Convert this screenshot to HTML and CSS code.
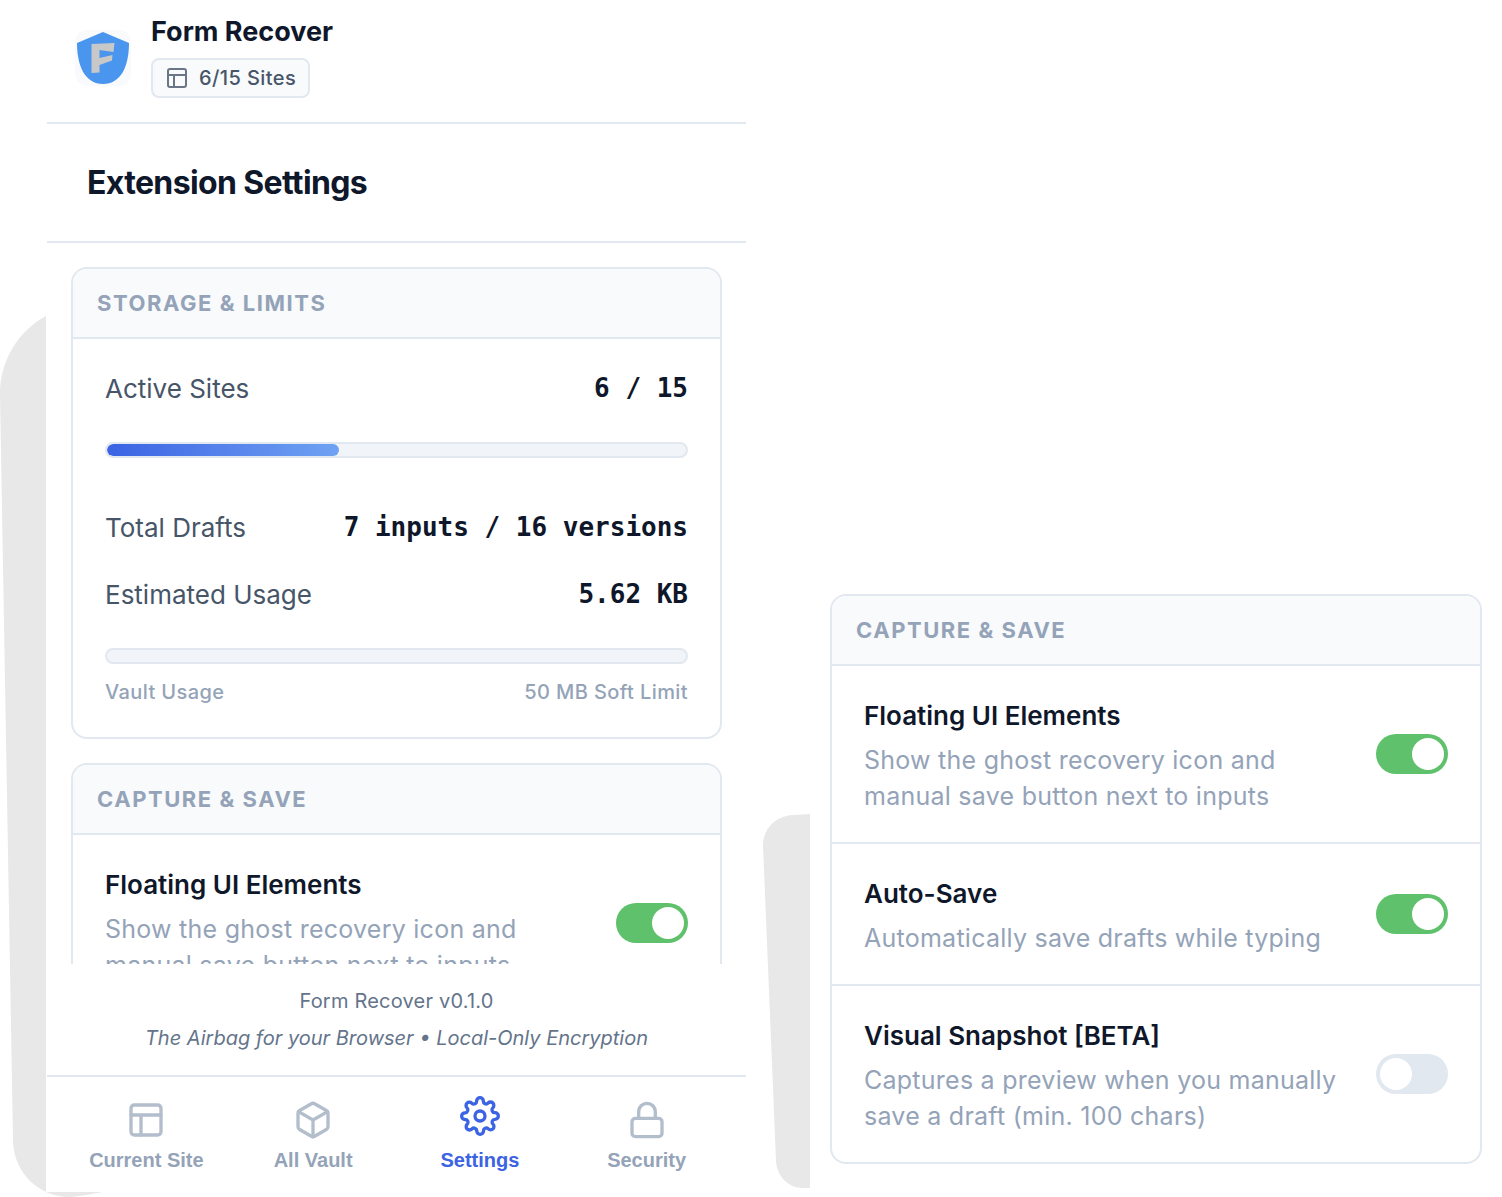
FILE: index.html
```html
<!DOCTYPE html>
<html lang="en">
<head>
    <meta charset="UTF-8">
    <meta name="viewport" content="width=device-width, initial-scale=1.0">
    <title>Form Recover - Extension Settings</title>
    <link rel="stylesheet" href="styles.css">
</head>
<body>
    <div class="stage">
        <!-- Extension popup -->
        <div class="popup-column">
            <svg class="shadow shadow-left" width="103" height="881" viewBox="0 0 103 881" aria-hidden="true">
                <path d="M46 0C18 15 0 45 0 78L13 825C14 858 40 881 70 881C82 880 92 878 102 876H46Z" fill="#e8e8e8"/>
            </svg>
            <div class="popup">
                <header class="header">
                    <svg class="logo" viewBox="0 0 56 56" role="img" aria-label="Form Recover logo">
                        <rect width="56" height="56" rx="12" fill="#f8fafc"/>
                        <path d="M28 2L54 13C54 36 46 54 28 54S2 36 2 13Z" fill="#4a95ee"/>
                        <path d="M16.500 14L39.500 13L38.500 22L24.500 20V28L37.500 25L37 30.500L24.500 35V42.500L16.500 43Z" fill="#c8c8c8"/>
                    </svg>
                    <div class="brand">
                        <h1>Form Recover</h1>
                        <div class="badge">
                            <svg class="badge-icon" viewBox="0 0 24 24" aria-hidden="true">
                                <rect x="3" y="3" width="18" height="18" rx="2"/>
                                <path d="M3 9h18M9 21V9"/>
                            </svg>
                            <span>6/15 Sites</span>
                        </div>
                    </div>
                </header>

                <div class="page-title">
                    <h2>Extension Settings</h2>
                </div>

                <main class="content">
                    <section class="card">
                        <h3 class="card-title">Storage &amp; Limits</h3>
                        <div class="stats">
                            <div class="stat">
                                <span>Active Sites</span>
                                <strong>6 / 15</strong>
                            </div>
                            <div class="bar" role="progressbar" aria-label="Active Sites" aria-valuenow="40">
                                <div class="bar-fill" style="width: 40%"></div>
                            </div>
                            <div class="stat stat-group">
                                <span>Total Drafts</span>
                                <strong>7 inputs / 16 versions</strong>
                            </div>
                            <div class="stat stat-next">
                                <span>Estimated Usage</span>
                                <strong>5.62 KB</strong>
                            </div>
                            <div class="bar" role="progressbar" aria-label="Vault Usage" aria-valuenow="0">
                                <div class="bar-fill" style="width: 0%"></div>
                            </div>
                            <div class="bar-labels">
                                <span>Vault Usage</span>
                                <span>50 MB Soft Limit</span>
                            </div>
                        </div>
                    </section>

                    <section class="card">
                        <h3 class="card-title">Capture &amp; Save</h3>
                        <div class="setting">
                            <label class="setting-text" for="floating">
                                <span class="setting-name">Floating UI Elements</span>
                                <span class="setting-desc">Show the ghost recovery icon and manual save button next to inputs</span>
                            </label>
                            <input class="toggle" type="checkbox" id="floating" checked>
                        </div>
                    </section>
                </main>

                <footer class="footer">
                    <p>Form Recover v0.1.0</p>
                    <p class="tagline">The Airbag for your Browser • Local-Only Encryption</p>
                </footer>

                <nav class="nav">
                    <button class="nav-item" type="button">
                        <svg class="nav-icon" viewBox="0 0 24 24" aria-hidden="true">
                            <rect x="3" y="3" width="18" height="18" rx="2"/>
                            <path d="M3 9h18M9 21V9"/>
                        </svg>
                        <span>Current Site</span>
                    </button>
                    <button class="nav-item" type="button">
                        <svg class="nav-icon" viewBox="0 0 24 24" aria-hidden="true">
                            <path d="M21 16V8a2 2 0 0 0-1-1.730l-7-4a2 2 0 0 0-2 0l-7 4A2 2 0 0 0 3 8v8a2 2 0 0 0 1 1.730l7 4a2 2 0 0 0 2 0l7-4A2 2 0 0 0 21 16z"/>
                            <path d="M3.270 6.960L12 12.010l8.730-5.050M12 22.080V12"/>
                        </svg>
                        <span>All Vault</span>
                    </button>
                    <button class="nav-item active" type="button">
                        <svg class="nav-icon" viewBox="0 0 24 24" aria-hidden="true">
                            <circle cx="12" cy="12" r="3"/>
                            <path d="M19.400 15a1.650 1.650 0 0 0 .33 1.820l.06.06a2 2 0 0 1 0 2.830 2 2 0 0 1-2.830 0l-.06-.06a1.650 1.650 0 0 0-1.820-.33 1.650 1.650 0 0 0-1 1.510V21a2 2 0 0 1-2 2 2 2 0 0 1-2-2v-.09A1.650 1.650 0 0 0 9 19.400a1.650 1.650 0 0 0-1.820.33l-.06.06a2 2 0 0 1-2.830 0 2 2 0 0 1 0-2.830l.06-.06a1.650 1.650 0 0 0 .33-1.820 1.650 1.650 0 0 0-1.510-1H3a2 2 0 0 1-2-2 2 2 0 0 1 2-2h.09A1.650 1.650 0 0 0 4.600 9a1.650 1.650 0 0 0-.33-1.820l-.06-.06a2 2 0 0 1 0-2.830 2 2 0 0 1 2.830 0l.06.06a1.650 1.650 0 0 0 1.820.33H9a1.650 1.650 0 0 0 1-1.510V3a2 2 0 0 1 2-2 2 2 0 0 1 2 2v.09a1.650 1.650 0 0 0 1 1.510 1.650 1.650 0 0 0 1.820-.33l.06-.06a2 2 0 0 1 2.830 0 2 2 0 0 1 0 2.830l-.06.06a1.650 1.650 0 0 0-.33 1.820V9a1.650 1.650 0 0 0 1.510 1H21a2 2 0 0 1 2 2 2 2 0 0 1-2 2h-.09a1.650 1.650 0 0 0-1.510 1z"/>
                        </svg>
                        <span>Settings</span>
                    </button>
                    <button class="nav-item" type="button">
                        <svg class="nav-icon" viewBox="0 0 24 24" aria-hidden="true">
                            <rect x="3" y="11" width="18" height="11" rx="2"/>
                            <path d="M7 11V7a5 5 0 0 1 10 0v4"/>
                        </svg>
                        <span>Security</span>
                    </button>
                </nav>
            </div>
        </div>

        <!-- Capture settings card -->
        <div class="detail-column">
            <svg class="shadow shadow-right" width="47" height="374" viewBox="0 0 47 374" aria-hidden="true">
                <path d="M47 0L30 1C12 2 0 15 0 32L13 347C14 362 25 374 40 374H47Z" fill="#e8e8e8"/>
            </svg>
            <section class="card">
                <h3 class="card-title">Capture &amp; Save</h3>
                <div class="setting">
                    <label class="setting-text" for="floating-detail">
                        <span class="setting-name">Floating UI Elements</span>
                        <span class="setting-desc">Show the ghost recovery icon and manual save button next to inputs</span>
                    </label>
                    <input class="toggle" type="checkbox" id="floating-detail" checked>
                </div>
                <div class="setting">
                    <label class="setting-text" for="autosave">
                        <span class="setting-name">Auto-Save</span>
                        <span class="setting-desc">Automatically save drafts while typing</span>
                    </label>
                    <input class="toggle" type="checkbox" id="autosave" checked>
                </div>
                <div class="setting">
                    <label class="setting-text" for="snapshot">
                        <span class="setting-name">Visual Snapshot [BETA]</span>
                        <span class="setting-desc">Captures a preview when you manually save a draft (min. 100 chars)</span>
                    </label>
                    <input class="toggle" type="checkbox" id="snapshot">
                </div>
            </section>
        </div>
    </div>
</body>
</html>
```
FILE: styles.css
```css
* {
    box-sizing: border-box;
}

body {
    margin: 0;
    font-family: Inter, sans-serif;
    background: #fff;
    color: #0f172a;
}

h1, h2, h3, p {
    margin: 0;
}

.stage {
    display: grid;
    grid-template-columns: 699fr 672fr;
    gap: 64px;
    height: 100vh;
    padding: 0 20px 0 47px;
    overflow: hidden;
}

/* Grey shapes behind the panels */
.popup-column,
.detail-column {
    position: relative;
    min-width: 0;
}

.shadow {
    position: absolute;
    z-index: -1;
}

.shadow-left {
    left: -47px;
    bottom: 0;
}

.shadow-right {
    left: -47px;
    bottom: -24px;
}

/* Popup */
.popup-column {
    height: 100vh;
    padding-bottom: 5px;
}

.popup {
    display: flex;
    flex-direction: column;
    height: 100%;
    background: #fff;
}

.detail-column {
    align-self: end;
    margin-bottom: 33px;
    padding-left: 20px;
    background: #fff;
}

.header {
    display: flex;
    align-items: center;
    gap: 20px;
    padding: 14px 28px 24px;
    border-bottom: 2px solid #e2e8f0;
}

.logo {
    width: 56px;
    height: 56px;
    margin-top: 4px;
}

.brand {
    display: flex;
    flex-direction: column;
    align-items: flex-start;
    gap: 8px;
}

.brand h1 {
    font-size: 27px;
    line-height: 36px;
    font-weight: 700;
}

.badge {
    display: flex;
    align-items: center;
    gap: 10px;
    height: 40px;
    padding: 0 12px;
    border: 2px solid #e2e8f0;
    border-radius: 8px;
    background: #f8fafc;
    color: #475569;
    font-size: 20px;
    font-weight: 500;
    letter-spacing: 0.02em;
}

.badge-icon,
.nav-icon {
    fill: none;
    stroke: currentColor;
    stroke-width: 2;
    stroke-linecap: round;
    stroke-linejoin: round;
}

.badge-icon {
    width: 24px;
    height: 24px;
    opacity: 0.8;
}

.page-title {
    padding: 36px 40px;
    border-bottom: 2px solid #e2e8f0;
}

.page-title h2 {
    font-size: 32px;
    line-height: 45px;
    font-weight: 700;
    letter-spacing: -0.02em;
}

.content {
    display: flex;
    flex: 1;
    flex-direction: column;
    gap: 24px;
    min-height: 0;
    padding: 24px 24px 0;
    overflow: hidden;
}

/* Cards */
.card {
    flex-shrink: 0;
    border: 2px solid #e2e8f0;
    border-radius: 16px;
    background: #fff;
    overflow: hidden;
}

.card-title {
    padding: 0 24px;
    border-bottom: 2px solid #e2e8f0;
    background: #f8fafc;
    color: #94a3b8;
    font-size: 22px;
    line-height: 68px;
    font-weight: 700;
    letter-spacing: 0.07em;
    text-transform: uppercase;
}

.stats {
    padding: 28px 32px 32px;
}

.stat {
    display: flex;
    justify-content: space-between;
    color: #475569;
    font-size: 26px;
    line-height: 43px;
}

.stat strong {
    color: #0f172a;
    font-family: "DejaVu Sans Mono", monospace;
}

.stat-group {
    margin-top: 48px;
}

.stat-next {
    margin-top: 24px;
}

.bar {
    height: 16px;
    margin-top: 32px;
    border: 2px solid #e2e8f0;
    border-radius: 8px;
    background: #f1f5f9;
    overflow: hidden;
}

.bar-fill {
    height: 100%;
    border-radius: 6px;
    background: linear-gradient(90deg, #3b63e3, #6fa2f3);
}

.bar-labels {
    display: flex;
    justify-content: space-between;
    margin-top: 16px;
    color: #94a3b8;
    font-size: 20px;
    line-height: 25px;
    font-weight: 500;
    letter-spacing: 0.02em;
}

/* Settings rows */
.setting {
    display: flex;
    align-items: center;
    justify-content: space-between;
    gap: 32px;
    padding: 28px 32px;
}

.setting + .setting {
    border-top: 2px solid #e2e8f0;
}

.setting-text {
    display: flex;
    flex-direction: column;
    gap: 4px;
}

.setting-name {
    font-size: 26px;
    line-height: 44px;
    font-weight: 600;
}

.setting-desc {
    color: #94a3b8;
    font-size: 25px;
    line-height: 36px;
    letter-spacing: 0.01em;
}

.toggle {
    display: flex;
    flex-shrink: 0;
    width: 72px;
    height: 40px;
    margin: 0;
    padding: 4px;
    appearance: none;
    border-radius: 20px;
    background: #e2e8f0;
    cursor: pointer;
}

.toggle::before {
    content: "";
    width: 32px;
    height: 32px;
    border-radius: 50%;
    background: #fff;
}

.toggle:checked {
    justify-content: flex-end;
    background: #5fc16b;
}

/* Footer and navigation */
.footer {
    padding: 19px 24px 18px;
    color: #64748b;
    font-size: 20px;
    line-height: 37px;
    letter-spacing: 0.01em;
    text-align: center;
}

.tagline {
    font-style: italic;
    letter-spacing: normal;
}

.nav {
    display: grid;
    grid-template-columns: repeat(4, 1fr);
    height: 117px;
    padding: 23px 16px 0;
    border-top: 2px solid #e2e8f0;
}

.nav-item {
    display: flex;
    flex-direction: column;
    align-items: center;
    gap: 8px;
    padding: 0;
    border: none;
    background: none;
    color: #94a3b8;
    font-family: "Liberation Sans", Arial, sans-serif;
    font-size: 20px;
    line-height: 24px;
    font-weight: 700;
    cursor: pointer;
}

.nav-icon {
    width: 40px;
    height: 40px;
    opacity: 0.7;
}

.nav-item.active {
    color: #3b63e3;
}

.nav-item.active .nav-icon {
    opacity: 1;
    transform: translateY(-4px);
}
```
